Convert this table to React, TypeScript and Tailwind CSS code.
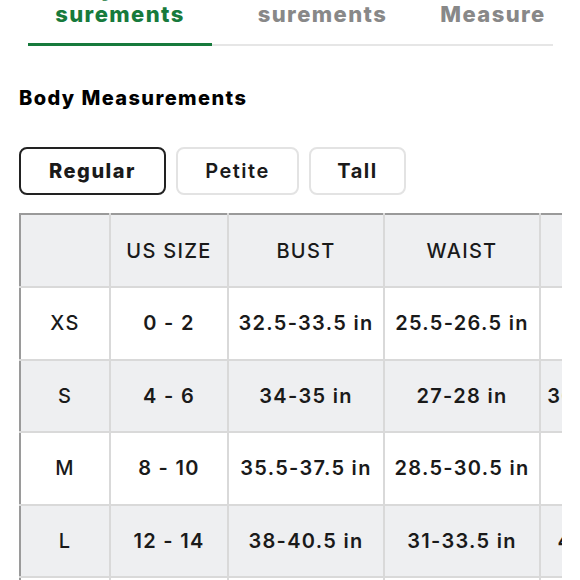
import React from "react";

const font = { fontFamily: "Inter, 'Noto Sans', sans-serif" };

const rows = [
  { s: "XS", us: "0 - 2", bust: "32.5-33.5 in", waist: "25.5-26.5 in", hip: "34-35 in", bg: "bg-white" },
  { s: "S", us: "4 - 6", bust: "34-35 in", waist: "27-28 in", hip: "36.5-37.5 in", bg: "bg-[#eeeff1]" },
  { s: "M", us: "8 - 10", bust: "35.5-37.5 in", waist: "28.5-30.5 in", hip: "38-40 in", bg: "bg-white" },
  { s: "L", us: "12 - 14", bust: "38-40.5 in", waist: "31-33.5 in", hip: "41.5-43 in", bg: "bg-[#eeeff1]" },
  { s: "XL", us: "16", bust: "41-43 in", waist: "34-36 in", hip: "44-46 in", bg: "bg-white" },
];

export default function App() {
  return (
    <div className="w-[580px] h-[580px] overflow-hidden bg-white text-[#1a1a1a]" style={font}>
      {/* Tabs */}
      <div className="mx-[28px] w-[525px] flex mt-[-25px]">
        <div className="w-[184px] flex flex-col items-center border-b-[3px] border-[#177a3c] h-[71px]">
          <div className="text-[22px] leading-[26px] font-extrabold tracking-[1.4px] text-[#177a3c] text-center">Body Mea-<br />surements</div>
        </div>
        <div className="w-[221px] flex flex-col items-center border-b-2 border-[#e6e6e6] h-[71px]">
          <div className="text-[22px] leading-[26px] font-extrabold tracking-[1.4px] text-[#888888] text-center">Outerwear Mea-<br />surements</div>
        </div>
        <div className="w-[120px] flex flex-col items-center border-b-2 border-[#e6e6e6] h-[71px]">
          <div className="text-[22px] leading-[26px] font-extrabold tracking-[1.4px] text-[#888888] text-center whitespace-nowrap">How to<br />Measure</div>
        </div>
      </div>

      <div className="px-[19px]">
        <h2 className="mt-[38px] text-[20px] leading-[28px] font-extrabold tracking-[1.4px] text-black">Body Measurements</h2>

        <div className="mt-[35px] flex gap-[10px]">
          <button className="w-[147px] h-[48px] rounded-[8px] border-2 border-[#222] text-[20px] font-extrabold tracking-[1.5px] text-[#1a1a1a]">Regular</button>
          <button className="w-[123px] h-[48px] rounded-[8px] border-2 border-[#e3e3e3] text-[20px] font-semibold tracking-[1.5px] text-[#1a1a1a]">Petite</button>
          <button className="w-[97px] h-[48px] rounded-[8px] border-2 border-[#e3e3e3] text-[20px] font-bold tracking-[1.5px] text-[#1a1a1a]">Tall</button>
        </div>

        <div className="mt-[18px] w-[543px] overflow-hidden">
          <table className="border-collapse table-fixed w-[666px] text-[20px] font-semibold tracking-[1.3px] text-[#1a1a1a]">
            <colgroup>
              <col className="w-[90px]" />
              <col className="w-[118px]" />
              <col className="w-[156px]" />
              <col className="w-[156px]" />
              <col className="w-[146px]" />
            </colgroup>
            <thead>
              <tr className="h-[73px] bg-[#eeeff1]">
                <th className="border-2 border-[#d9d9d9] border-t-[#9a9a9a] border-l-[#9a9a9a] font-medium"></th>
                <th className="border-2 border-[#d9d9d9] border-t-[#9a9a9a] font-medium">US SIZE</th>
                <th className="border-2 border-[#d9d9d9] border-t-[#9a9a9a] font-medium">BUST</th>
                <th className="border-2 border-[#d9d9d9] border-t-[#9a9a9a] font-medium">WAIST</th>
                <th className="border-2 border-[#d9d9d9] border-t-[#9a9a9a] font-medium">HIP</th>
              </tr>
            </thead>
            <tbody>
              {rows.map((r) => (
                <tr key={r.s} className={`h-[72.6px] ${r.bg}`}>
                  <td className="border-2 border-[#d9d9d9] border-l-[#9a9a9a] text-center font-medium">{r.s}</td>
                  <td className="border-2 border-[#d9d9d9] text-center">{r.us}</td>
                  <td className="border-2 border-[#d9d9d9] text-center">{r.bust}</td>
                  <td className="border-2 border-[#d9d9d9] text-center">{r.waist}</td>
                  <td className="border-2 border-[#d9d9d9] text-center">{r.hip}</td>
                </tr>
              ))}
            </tbody>
          </table>
        </div>
      </div>
    </div>
  );
}
